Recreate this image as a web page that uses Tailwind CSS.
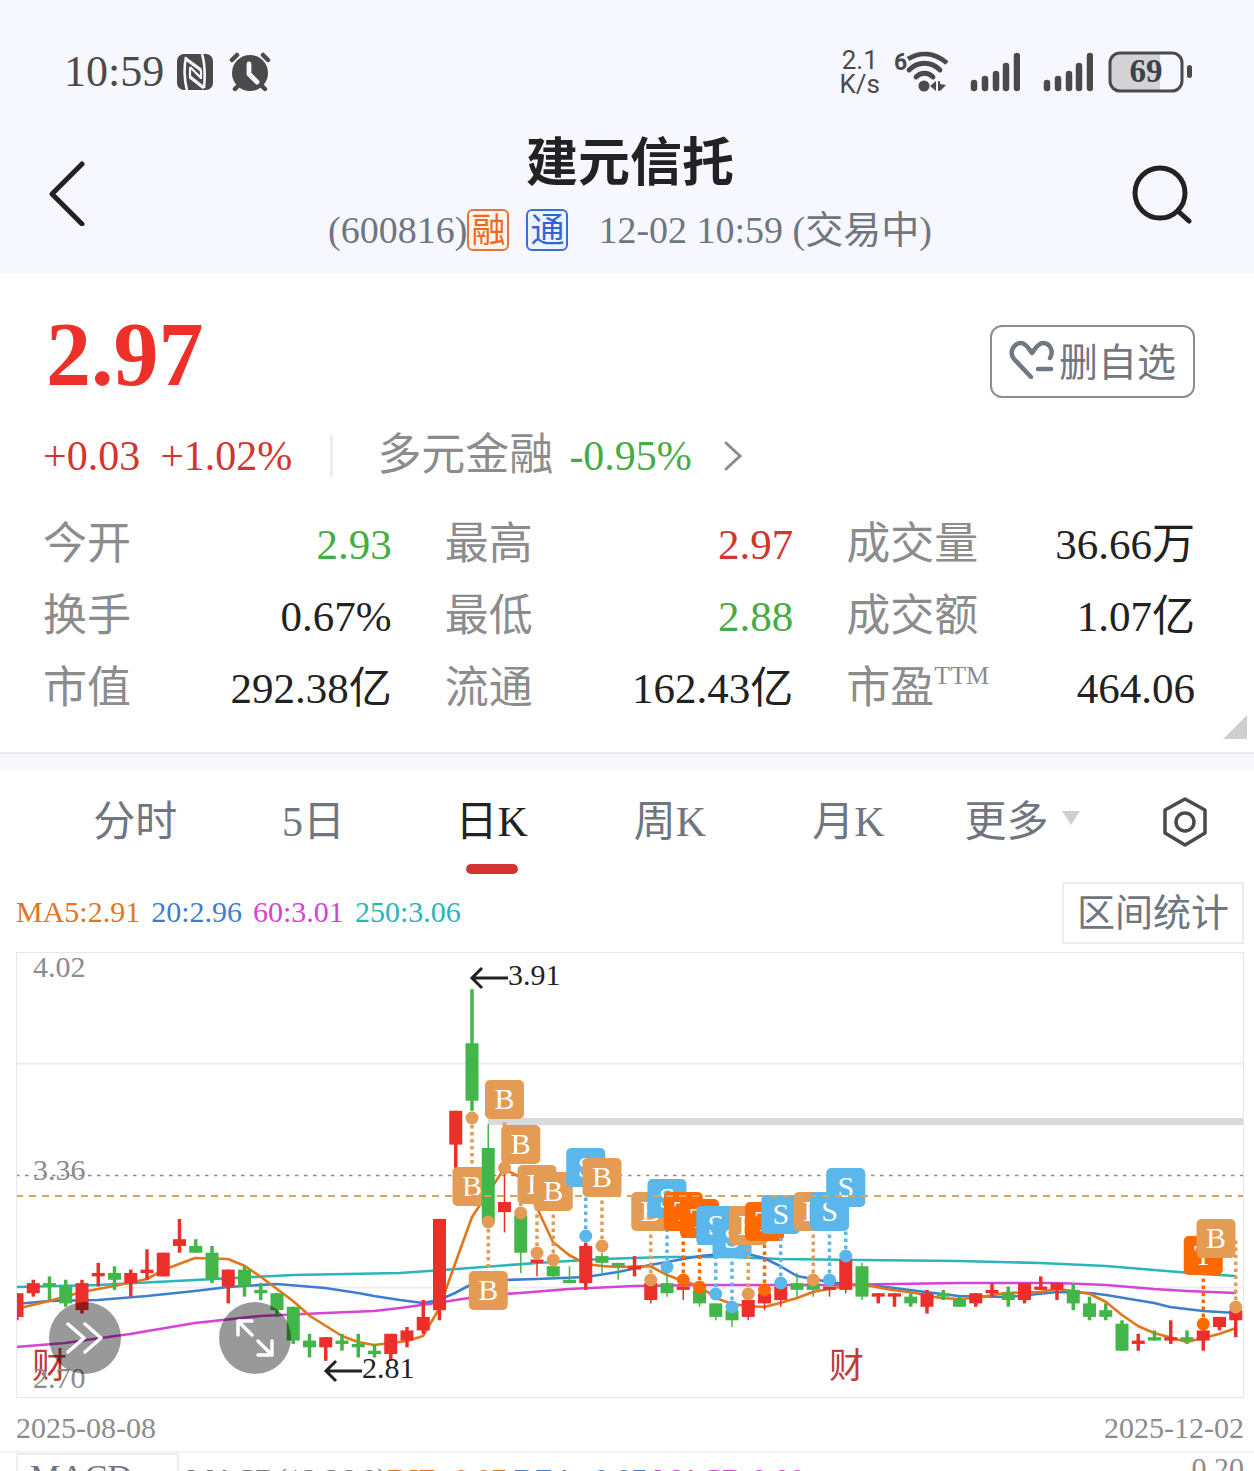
<!DOCTYPE html>
<html lang="zh-CN">
<head>
  <meta charset="UTF-8">
  <meta name="viewport" content="width=device-width, initial-scale=1.0">
  <title>建元信托 600816</title>
  <script src="https://cdn.jsdelivr.net/npm/@tailwindcss/browser@4"></script>
</head>
<body class="bg-white font-['Liberation_Serif','Noto_Sans_CJK_SC',serif] h-screen overflow-hidden text-[#222]">
  <header class="bg-[#f7f8ff] pt-12 pb-[18px]">
    <!-- status bar -->
    <div class="h-12 flex items-center justify-between pl-16 pr-[62px] text-[#4a4a4a]">
      <div class="flex items-center">
        <span class="text-[44px] leading-[48px]">10:59</span>
        <svg class="w-9 h-9 ml-[13px]" viewBox="0 0 36 36">
          <rect width="36" height="36" rx="7" fill="#4a4a4a"/>
          <path d="M9 3 C7 12 7 26 10 36 M25 0 C28 10 28 24 27 34" fill="none" stroke="#f7f8ff" stroke-width="2.6"/>
          <path d="M9 5 L24 16 M13 23 L27 34" fill="none" stroke="#f7f8ff" stroke-width="3.4"/>
          <path d="M13 13 L24 24 M13 13 V24 M24 16 V25" fill="none" stroke="#f7f8ff" stroke-width="2.2"/>
        </svg>
        <svg class="w-[42px] h-10 ml-4" viewBox="0 0 42 40">
          <circle cx="21" cy="21" r="18" fill="#4a4a4a"/>
          <path d="M3 8 L8 3 M39 8 L34 3 M6 37 L11 32 M36 37 L31 32" stroke="#4a4a4a" stroke-width="4.5" stroke-linecap="round"/>
          <path d="M20 12 V22 L28 30" fill="none" stroke="#f7f8ff" stroke-width="4.8" stroke-linecap="round" stroke-linejoin="round"/>
        </svg>
      </div>
      <div class="flex items-center">
        <div class="font-['Roboto',sans-serif] text-[26px] leading-6 text-center">2.1<br>K/s</div>
        <svg class="w-14 h-11 ml-[14px]" viewBox="0 0 56 44" fill="none" stroke="#4a4a4a" stroke-width="4.8" stroke-linecap="round">
          <text x="0" y="20" font-family="Roboto" font-size="23" font-weight="700" fill="#4a4a4a" stroke="none">6</text>
          <path d="M14 9 C27 1 41 3 53 13" stroke-linecap="butt"/>
          <path d="M15 20 C24 11 37 11 46 20"/>
          <path d="M22 27 C27 22 34 22 39 27"/>
          <circle cx="30" cy="36" r="5.5" fill="#4a4a4a" stroke="none"/>
          <path d="M36 36 L42 31 V41 Z M52 35 L46 41 V34 Z" fill="#4a4a4a" stroke="none"/>
          <path d="M45 32 V40" stroke-width="2"/>
        </svg>
        <svg class="w-[50px] h-10 ml-5" viewBox="0 0 50 40" stroke="#4a4a4a" stroke-width="6.5" stroke-linecap="round">
          <path d="M4 31 V36 M15 27 V36 M26 22 V36 M36 14 V36 M47 4 V36"/>
        </svg>
        <svg class="w-[50px] h-10 ml-[23px]" viewBox="0 0 50 40" stroke="#4a4a4a" stroke-width="6.5" stroke-linecap="round">
          <path d="M4 31 V36 M15 27 V36 M26 22 V36 M36 14 V36 M47 4 V36"/>
        </svg>
        <svg class="w-[84px] h-[42px] ml-[15px]" viewBox="0 0 84 42">
          <path d="M12 2 H52 V40 H12 C6 40 3 37 3 30 V12 C3 5 6 2 12 2 Z" fill="#d5d2d6"/>
          <rect x="2" y="2" width="72" height="38" rx="10" fill="none" stroke="#4a4a4a" stroke-width="3"/>
          <rect x="79" y="14" width="5" height="13" rx="2.5" fill="#4a4a4a"/>
          <text x="38" y="31" text-anchor="middle" font-family="Liberation Serif" font-size="33" font-weight="700" fill="#37444a">69</text>
        </svg>
      </div>
    </div>
    <!-- title bar -->
    <div class="mt-[35px] flex items-center">
      <button type="button" aria-label="返回" class="w-32 pl-12">
        <svg class="w-[38px] h-[66px]" viewBox="0 0 38 66" fill="none" stroke="#222" stroke-width="5" stroke-linecap="round" stroke-linejoin="round">
          <path d="M34 4 L4 34 L34 64"/>
        </svg>
      </button>
      <div class="flex-1 text-center">
        <h1 class="text-[52px] leading-[66px] font-bold">建元信托</h1>
        <div class="mt-2 flex items-center justify-center text-[38px] leading-[50px] text-[#6f7680]">
          <span>(600816)</span>
          <span class="w-[42px] h-[42px] border-2 border-[#e37637] rounded-md text-[34px] leading-[40px] bg-[#fff3ee] text-[#ec6a1c]">融</span>
          <span class="w-[42px] h-[42px] ml-[17px] border-2 border-[#3b6fd6] rounded-md text-[34px] leading-[40px] bg-[#eef4ff] text-[#3163d8]">通</span>
          <span class="ml-[30px]">12-02 10:59 (交易中)</span>
        </div>
      </div>
      <button type="button" aria-label="搜索" class="w-[122px] pr-1">
        <svg class="w-[62px] h-[62px]" viewBox="0 0 62 62" fill="none" stroke="#222" stroke-width="5" stroke-linecap="round">
          <circle cx="28" cy="31" r="25"/>
          <path d="M47 50 L57 59"/>
        </svg>
      </button>
    </div>
  </header>

  <!-- quote -->
  <section class="relative pt-[37px] pb-[27px] pl-[43px] pr-[59px]">
    <div class="flex items-center justify-between">
      <div class="pl-[3px] text-[90px] leading-[90px] font-bold text-[#ed3029]">2.97</div>
      <button type="button" class="mt-3 w-[205px] h-[73px] border-2 border-[#8a8d98] rounded-xl flex items-center justify-center gap-1 pb-1 font-['Noto_Sans_CJK_SC',sans-serif] text-[39px] leading-none text-[#717784]">
        <svg class="w-[46px] h-[40px]" viewBox="0 0 46 40" fill="none" stroke="#717784" stroke-width="4.5" stroke-linecap="round" stroke-linejoin="round">
          <path d="M22 38 L5 20 C-1 12 6 4 12 4 C17 4 20 10 23 14 C26 10 29 4 34 4 C41 4 45 12 41 19"/>
          <path d="M29 30 H42"/>
        </svg>
        <span>删自选</span>
      </button>
    </div>
    <div class="mt-[29px] flex items-center text-[42px] leading-[54px] text-[#d2352f]">
      <span>+0.03</span>
      <span class="ml-5">+1.02%</span>
      <span class="ml-[38px] w-[3px] h-[42px] bg-[#ececf2]"></span>
      <a href="#" class="ml-11 flex items-center">
        <span class="text-[44px] text-[#8c8c8c]">多元金融</span>
        <span class="ml-4 text-[#45ac45]">-0.95%</span>
        <svg class="ml-[31px] w-5 h-8" viewBox="0 0 20 32" fill="none" stroke="#8c8c8c" stroke-width="3" stroke-linecap="round">
          <path d="M3 3 L17 16 L3 29"/>
        </svg>
      </a>
    </div>
    <dl class="mt-[26px] grid grid-cols-3 gap-x-[53px] text-[43px] leading-[72px] [&>div]:flex [&>div]:justify-between [&_dt]:text-[44px] [&_dt]:text-[#8c8c8c]">
      <div><dt>今开</dt><dd class="text-[#45ac45]">2.93</dd></div>
      <div><dt>最高</dt><dd class="text-[#d2352f]">2.97</dd></div>
      <div><dt>成交量</dt><dd>36.66万</dd></div>
      <div><dt>换手</dt><dd>0.67%</dd></div>
      <div><dt>最低</dt><dd class="text-[#45ac45]">2.88</dd></div>
      <div><dt>成交额</dt><dd>1.07亿</dd></div>
      <div><dt>市值</dt><dd>292.38亿</dd></div>
      <div><dt>流通</dt><dd>162.43亿</dd></div>
      <div><dt class="flex">市盈<span class="text-[26px] leading-[46px]">TTM</span></dt><dd>464.06</dd></div>
    </dl>
    <svg class="absolute right-[7px] bottom-[13px] w-6 h-6" viewBox="0 0 24 24"><path d="M24 0 V24 H0 Z" fill="#cfcfcf"/></svg>
  </section>
  <div class="h-[18px] bg-[#f7f8ff] border-t-2 border-[#ececf2]"></div>

  <!-- period tabs -->
  <nav class="pl-[46px] grid grid-cols-[repeat(6,178fr)_138fr] h-[104px] text-[42px] text-[#6f7680]">
    <button type="button">分时</button>
    <button type="button">5日</button>
    <button type="button" class="relative text-[#222]">日K<span class="absolute bottom-0 left-1/2 -translate-x-1/2 w-[52px] h-[10px] rounded-full bg-[#d23434]"></span></button>
    <button type="button">周K</button>
    <button type="button">月K</button>
    <button type="button" class="flex items-center justify-center gap-3 pr-2">更多
      <svg class="w-5 h-4 mb-2" viewBox="0 0 20 16"><path d="M1 1 H19 L10 15 Z" fill="#cfcfcf"/></svg>
    </button>
    <button type="button" aria-label="设置" class="flex items-center justify-center">
      <svg class="w-11 h-[50px]" viewBox="0 0 44 50" fill="none" stroke="#4a4a4a" stroke-width="3.5">
        <path d="M22 2 L42 13 V36 L22 48 L2 36 V13 Z" stroke-linejoin="round"/>
        <circle cx="22" cy="25" r="9"/>
      </svg>
    </button>
  </nav>

  <section class="pl-4 pr-[10px] pt-2">
    <div class="flex items-center justify-between h-[62px]">
      <div class="flex gap-[11px] pb-1 text-[30px]">
        <span class="text-[#e2761c]">MA5:2.91</span>
        <span class="text-[#3d7ecf]">20:2.96</span>
        <span class="text-[#d643d6]">60:3.01</span>
        <span class="text-[#2bb5b9]">250:3.06</span>
      </div>
      <button type="button" class="w-[182px] h-[62px] border-2 border-[#ececf2] text-[38px] leading-none text-[#6f7680]">区间统计</button>
    </div>

    <div class="relative mt-2">
      <svg id="kline" class="block w-full" viewBox="0 0 1228 446" font-size="30"></svg>
      <button type="button" aria-label="展开" class="absolute left-[33px] bottom-6 w-[72px] h-[72px] rounded-full bg-black/40 flex items-center justify-center">
        <svg class="w-10 h-8" viewBox="0 0 40 32" fill="none" stroke="#fff" stroke-width="3.5" stroke-linecap="round" stroke-linejoin="round">
          <path d="M3 2 L19 16 L3 30 M20 2 L36 16 L20 30"/>
        </svg>
      </button>
      <button type="button" aria-label="全屏" class="absolute left-[203px] bottom-6 w-[72px] h-[72px] rounded-full bg-black/40 flex items-center justify-center">
        <svg class="w-10 h-10" viewBox="0 0 40 40" fill="none" stroke="#fff" stroke-width="3.5" stroke-linecap="round" stroke-linejoin="round">
          <path d="M17 17 L3 3 M3 17 V3 H17 M23 23 L37 37 M37 23 V37 H23"/>
        </svg>
      </button>
    </div>
    <div class="h-[53px] pt-[6px] flex items-center justify-between text-[30px] text-[#8c8c8c]">
      <span>2025-08-08</span>
      <span>2025-12-02</span>
    </div>
  </section>

  <!-- indicator panel -->
  <section class="pl-4 pr-[10px] border-t-2 border-[#f2f2f8]">
    <div class="flex items-start text-[30px] text-[#6f7680]">
      <button type="button" class="w-[163px] h-12 border-2 border-[#ececf2] pl-3 text-left text-[34px] leading-[44px]">MACD</button>
      <div class="ml-2 flex leading-[52px] whitespace-pre"><span>MACD(12,26,9)</span><span class="text-[#e2761c]">DIF:-0.07 </span><span class="text-[#3d7ecf]">DEA:-0.07 </span><span class="text-[#d643d6]">MACD:0.00</span></div>
      <span class="ml-auto leading-[30px] text-[#8c8c8c]">0.20</span>
    </div>
  </section>

  <script>
    const RED = '#ec2f2b', GREEN = '#43b649';
    const COLORS = { B: '#e49b54', S: '#5ab6eb', T: '#ff6a00' };
    const STEP = 16.25, MAX = 4.02, MIN = 2.70, H = 446;
    const px = i => 1 + i * STEP;
    const py = p => (MAX - p) / (MAX - MIN) * H;

    // [up, high, body top, body bottom, low]
    const candles = [
      [1,3.01,3.01,2.94,2.93],[1,3.05,3.04,3.01,3.00],[0,3.06,3.04,3.03,2.99],[0,3.05,3.03,2.98,2.97],
      [1,3.05,3.04,2.96,2.95],[1,3.10,3.07,3.06,3.03],[0,3.09,3.07,3.05,3.02],[1,3.08,3.07,3.04,3.00],
      [1,3.14,3.08,3.07,3.05],[1,3.13,3.13,3.06,3.06],[1,3.23,3.17,3.15,3.13],[0,3.17,3.15,3.13,3.13],
      [0,3.15,3.13,3.05,3.04],[1,3.08,3.08,3.03,2.98],[0,3.09,3.08,3.03,3.00],[0,3.04,3.02,3.01,2.99],
      [0,3.01,3.01,2.96,2.94],[0,2.97,2.97,2.87,2.86],[0,2.89,2.87,2.85,2.82],[1,2.88,2.88,2.85,2.81],
      [0,2.89,2.87,2.86,2.84],[0,2.89,2.86,2.85,2.82],[0,2.86,2.84,2.83,2.82],[1,2.89,2.89,2.83,2.81],
      [1,2.91,2.90,2.87,2.85],[1,2.99,2.94,2.90,2.89],[1,3.23,3.23,2.96,2.93],[1,3.55,3.55,3.45,3.38],
      [0,3.91,3.75,3.58,3.55],[0,3.51,3.44,3.22,3.22],[1,3.38,3.28,3.25,3.19],[0,3.24,3.24,3.13,3.07],
      [1,3.11,3.11,3.10,3.06],[0,3.09,3.09,3.06,3.05],[0,3.09,3.05,3.04,3.04],[1,3.16,3.15,3.04,3.02],
      [0,3.13,3.12,3.10,3.07],[0,3.10,3.10,3.09,3.05],[1,3.12,3.09,3.08,3.06],[1,3.04,3.04,2.99,2.98],
      [0,3.07,3.04,3.01,3.00],[1,3.03,3.03,3.02,2.99],[0,3.02,3.02,2.98,2.97],[0,2.98,2.98,2.94,2.93],
      [0,2.96,2.96,2.93,2.91],[1,2.99,2.99,2.94,2.93],[1,3.01,3.01,2.98,2.96],[1,3.03,3.03,2.99,2.97],
      [0,3.07,3.04,3.02,3.00],[0,3.04,3.04,3.02,3.00],[1,3.03,3.03,3.02,3.00],[1,3.11,3.11,3.02,3.01],
      [0,3.10,3.09,3.00,2.99],[1,3.01,3.01,3.00,2.98],[1,3.01,3.01,3.00,2.97],[0,3.01,3.00,2.98,2.97],
      [1,3.02,3.01,2.97,2.95],[0,3.02,3.01,3.00,2.99],[0,3.00,2.99,2.97,2.97],[1,3.01,3.01,2.98,2.97],
      [1,3.04,3.02,3.01,3.00],[0,3.03,3.01,2.99,2.97],[1,3.04,3.04,2.99,2.98],[1,3.06,3.03,3.02,3.02],
      [1,3.04,3.04,3.02,2.99],[0,3.04,3.02,2.98,2.96],[0,3.00,2.98,2.94,2.93],[0,2.98,2.96,2.94,2.93],
      [0,2.93,2.92,2.84,2.84],[1,2.89,2.87,2.86,2.84],[0,2.90,2.88,2.87,2.87],[1,2.93,2.88,2.87,2.86],
      [0,2.90,2.88,2.87,2.86],[1,2.90,2.90,2.87,2.84],[1,2.94,2.94,2.91,2.90],[1,2.96,2.96,2.93,2.88]
    ];

    // candle index -> [type, dot y, side the tag sits on]
    const trades = {
      28: ['B',166,1], 29: ['B',270,1], 30: ['B',216,-1], 31: ['B',261,-1], 32: ['B',301,-1], 33: ['B',308,-1],
      35: ['S',284,-1], 36: ['B',294,-1], 39: ['B',328,-1], 40: ['S',315,-1], 41: ['T',328,-1], 42: ['T',335,-1],
      43: ['S',342,-1], 44: ['S',355,-1], 45: ['B',342,-1], 46: ['T',338,-1], 47: ['S',331,-1], 49: ['B',328,-1],
      50: ['S',328,-1], 51: ['S',304,-1], 73: ['T',372,-1], 75: ['B',355,-1]
    };

    const averages = {
      '#2bb5b9': '0,335 82,333 179,328 277,323 384,321 427,318 521,311 586,307 651,305 716,305 764,307 846,308 943,309 1024,311 1090,314 1138,318 1187,322 1220,324',
      '#d643d6': '0,395 49,391 114,382 179,371 244,364 309,361 358,359 384,356 427,350 472,343 504,341 553,337 618,334 684,333 748,333 813,333 878,332 943,331 1041,331 1090,333 1138,337 1171,339 1220,341',
      '#3d7ecf': '0,352 33,349 82,348 131,344 179,339 212,335 261,332 309,336 342,341 358,344 384,348 407,351 423,348 439,341 456,332 488,328 521,327 570,325 602,320 634,313 651,310 667,307 684,304 716,301 732,302 748,306 764,314 781,324 797,327 813,330 846,334 862,334 878,336 910,340 943,344 992,345 1041,340 1074,341 1090,343 1138,351 1154,355 1187,359 1220,361',
      '#e2761c': '0,357 33,349 66,340 98,334 131,327 147,318 179,306 212,307 229,314 245,325 277,349 294,364 326,384 342,390 358,393 391,389 407,384 423,357 439,312 456,265 472,241 488,217 504,225 521,256 537,290 553,303 570,312 586,314 602,315 634,314 651,323 667,329 683,334 700,346 716,352 732,354 748,355 764,351 781,346 797,340 813,337 829,334 846,332 870,337 899,341 924,346 943,347 959,346 989,341 1024,340 1041,337 1057,339 1074,342 1090,350 1106,363 1122,374 1138,381 1171,390 1187,386 1203,382 1220,376'
    };

    let s = '';
    for (const y of [111, 335]) s += `<path d="M0 ${y}.5 H1228" stroke="#eeeef2" stroke-width="2"/>`;
    s += '<path d="M0 223.5 H1228" stroke="#8c8c8c" stroke-width="1.5" stroke-dasharray="3.5 5.5"/>';
    s += '<rect x="472" y="166" width="756" height="7" fill="#dcd9dd"/>';
    for (const c in averages) s += `<polyline points="${averages[c]}" fill="none" stroke="${c}" stroke-width="2.6" stroke-linejoin="round"/>`;

    candles.forEach(([up, high, top, bottom, low], i) => {
      const x = px(i), c = up ? RED : GREEN;
      const thin = i > 28 && i < 53 && ![35, 38].includes(i);
      s += `<path d="M${x} ${py(high)} V${py(low)}" stroke="${c}" stroke-width="${thin ? 1.5 : 3.5}"/>`;
      s += `<rect x="${x - 6.5}" y="${py(top)}" width="13" height="${py(bottom) - py(top)}" fill="${c}"/>`;
      if (!trades[i]) return;
      const [type, y, side] = trades[i], color = COLORS[type];
      const cy = y + side * 68.5, cx = Math.min(x, 1200);
      s += `<path d="M${x} ${y} V${cy}" stroke="${color}" stroke-width="3.5" stroke-dasharray="3.5 3.5"/>`;
      s += `<circle cx="${x}" cy="${y}" r="6.5" fill="${color}"/>`;
      s += `<rect x="${cx - 19.5}" y="${cy - 19.5}" width="39" height="39" rx="5" fill="${color}"/>`;
      s += `<text x="${cx}" y="${cy + 9}" text-anchor="middle" fill="#fff">${type}</text>`;
    });

    s += '<path d="M0 244 H1228" stroke="#dba45c" stroke-width="2" stroke-dasharray="7 6"/>';
    s += '<rect x="0.5" y="0.5" width="1227" height="445" fill="none" stroke="#e6e6ec"/>';
    s += '<g fill="none" stroke="#222" stroke-width="3"><path d="M492 26 H456 M466 16 L456 26 L466 36"/><path d="M346 419 H310 M320 409 L310 419 L320 429"/></g>';
    s += '<g fill="#222"><text x="492" y="33">3.91</text><text x="346" y="426">2.81</text></g>';
    s += '<g fill="#c0393b" font-size="35"><text x="16" y="426">财</text><text x="813" y="426">财</text></g>';
    s += '<g fill="#8c8c8c"><text x="17" y="25">4.02</text><text x="17" y="228">3.36</text><text x="17" y="436">2.70</text></g>';
    document.getElementById('kline').innerHTML = s;
  </script>
</body>
</html>
